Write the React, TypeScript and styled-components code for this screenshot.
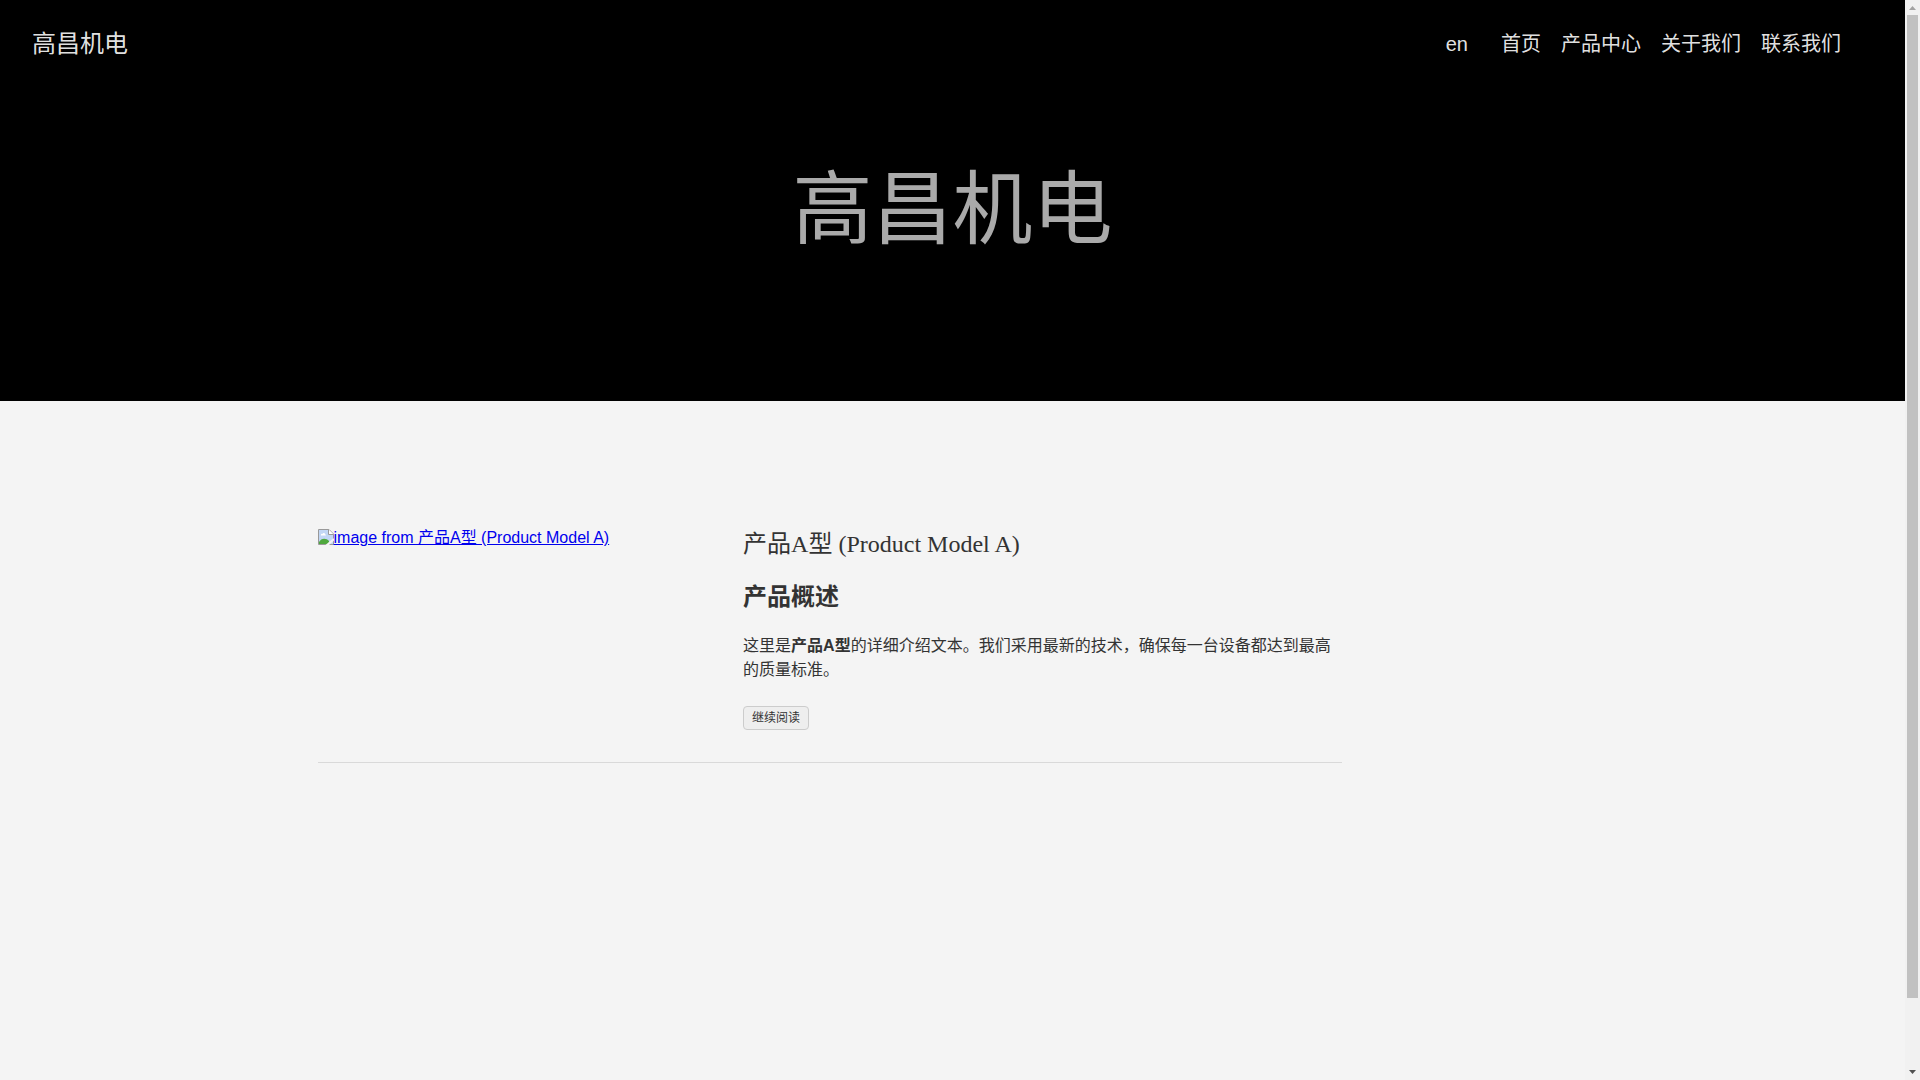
import React from "react";
import styled, { createGlobalStyle } from "styled-components";

const sans = `"Liberation Sans", "Noto Sans CJK SC", sans-serif`;
const serif = `"Liberation Serif", "Noto Sans CJK SC", serif`;

const GlobalStyle = createGlobalStyle`
  *, *::before, *::after { box-sizing: border-box; }
  body {
    margin: 0;
    background: #f4f4f4;
    color: #333;
    font: 16px/24px ${sans};
  }
`;

const Shell = styled.div`
  display: grid;
  grid-template-columns: minmax(0, 1fr) 15px;
  min-height: 100vh;
`;

const Page = styled.div`
  display: flex;
  flex-direction: column;
`;

const Header = styled.header`
  background: #000;
`;

const Nav = styled.nav`
  display: flex;
  flex-wrap: wrap;
  align-items: center;
  justify-content: space-between;
  gap: 16px 32px;
  padding: 28px 64px 28px 32px;
`;

const NavLink = styled.a`
  color: rgba(255, 255, 255, 0.9);
  font-size: 20px;
  line-height: 30px;
  text-decoration: none;

  &:hover { color: #fff; }
`;

const Brand = styled(NavLink)`
  font-size: 24px;
  line-height: 32px;
`;

const NavGroup = styled.div`
  display: flex;
  align-items: center;
  gap: 33px;
`;

const NavList = styled.ul`
  display: flex;
  flex-wrap: wrap;
  gap: 20px;
  margin: 0;
  padding: 0;
  list-style: none;
`;

const Hero = styled.div`
  padding: 72px 16px 141px;
  text-align: center;
`;

const HeroTitle = styled.h1`
  margin: 0;
  color: #aaa;
  font-size: 80px;
  font-weight: 400;
  line-height: 100px;
`;

const Main = styled.main`
  flex: 1;
  padding: 128px 16.6667%;
`;

const Article = styled.article`
  display: grid;
  grid-template-columns: 2fr 3fr;
  max-width: 1024px;
  padding-bottom: 32px;
  border-bottom: 1px solid #d9d9d9;
`;

const Cover = styled.a`
  display: flex;
  align-items: flex-start;
  color: #0000ee;
  line-height: 18px;
  text-decoration: underline;
`;

const Summary = styled.div`
  display: flex;
  flex-direction: column;
  align-items: flex-start;
  padding-left: 16px;
`;

const Title = styled.h2`
  margin: 0 0 20px;
  font: 400 24px/30px ${serif};
`;

const TitleLink = styled.a`
  color: inherit;
  text-decoration: none;
`;

const Subtitle = styled.h3`
  margin: 0 0 19px;
  font-size: 24px;
  line-height: 36px;
`;

const Text = styled.p`
  margin: 0 0 24px;
`;

const ReadMore = styled.a`
  padding: 0 8px;
  border: 1px solid #ccc;
  border-radius: 4px;
  background: #eee;
  color: inherit;
  font-size: 12px;
  line-height: 22px;
  text-decoration: none;
`;

const Track = styled.div`
  position: sticky;
  top: 0;
  display: flex;
  flex-direction: column;
  align-items: center;
  height: 100vh;
  background: #f1f1f1;
`;

const Arrow = styled.svg`
  flex: none;
  width: 15px;
  height: 15px;
`;

const Thumb = styled.div`
  flex: 983;
  width: 11px;
  background: #c1c1c1;
`;

const TrackRest = styled.div`
  flex: 67;
`;

const links = ["首页", "产品中心", "关于我们", "联系我们"];

function MissingImage() {
  return (
    <svg width="16" height="16" viewBox="0 0 16 16" aria-hidden="true">
      <path d="M.5.5h10.500l4.500 4.500v10.500H.5z" fill="#fff" stroke="#999" />
      <path d="M1 1h9.500v4.500H15V15H1z" fill="#c2d7f5" />
      <path d="M3 6.500c-.5-1.500 1-2 1.500-1.500.5-1.500 2.500-1 2.500.2 1 0 1.200 1.300.5 1.300z" fill="#fff" />
      <path d="M1 15v-2c2-4 7-4.500 10-1v3z" fill="#4fa83d" />
      <path d="M10.500.5v5h5" fill="#fff" stroke="#999" />
      <path d="M7.500 16 15 9.500h1v2L11 16z" fill="#f4f4f4" />
    </svg>
  );
}

export default function App() {
  return (
    <>
      <GlobalStyle />
      <Shell>
        <Page>
          <Header>
            <Nav>
              <Brand href="#">高昌机电</Brand>
              <NavGroup>
                <NavLink href="#en">en</NavLink>
                <NavList>
                  {links.map((label) => (
                    <li key={label}>
                      <NavLink href={`#${label}`}>{label}</NavLink>
                    </li>
                  ))}
                </NavList>
              </NavGroup>
            </Nav>
            <Hero>
              <HeroTitle>高昌机电</HeroTitle>
            </Hero>
          </Header>
          <Main>
            <Article>
              <div>
                <Cover href="#product-a">
                  <MissingImage />
                  image from 产品A型 (Product Model A)
                </Cover>
              </div>
              <Summary>
                <Title>
                  <TitleLink href="#product-a">产品A型 (Product Model A)</TitleLink>
                </Title>
                <Subtitle>产品概述</Subtitle>
                <Text>
                  这里是<strong>产品A型</strong>
                  的详细介绍文本。我们采用最新的技术，确保每一台设备都达到最高的质量标准。
                </Text>
                <ReadMore href="#product-a">继续阅读</ReadMore>
              </Summary>
            </Article>
          </Main>
        </Page>
        <Track aria-hidden="true">
          <Arrow viewBox="0 0 15 15">
            <path d="M4 10h7L7.500 6z" fill="#a3a3a3" />
          </Arrow>
          <Thumb />
          <TrackRest />
          <Arrow viewBox="0 0 15 15">
            <path d="M4 5h7L7.500 9z" fill="#505050" />
          </Arrow>
        </Track>
      </Shell>
    </>
  );
}
